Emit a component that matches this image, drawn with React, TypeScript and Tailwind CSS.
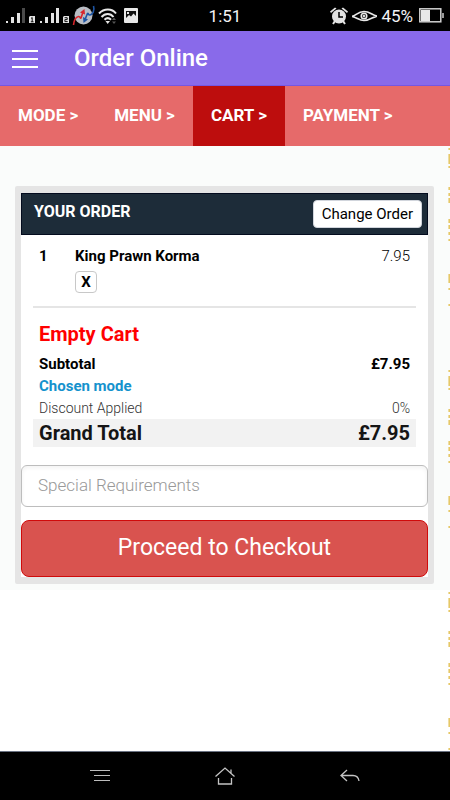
import type { ReactNode } from 'react';

const steps = [
  { label: 'MODE >', active: false },
  { label: 'MENU >', active: false },
  { label: 'CART >', active: true },
  { label: 'PAYMENT >', active: false },
];

const items = [{ qty: 1, name: 'King Prawn Korma', price: '7.95' }];

function Signal({ sim, weak }: { sim: string; weak?: boolean }) {
  return (
    <svg width="30" height="18" viewBox="0 0 30 18" fill="#e4e4e4">
      <rect x="0" y="14" width="2" height="2" />
      <rect x="5" y="10" width="3" height="6" />
      <rect x="11" y="6" width="3" height="10" />
      <rect x="16" y="1" width="3" height="15" fill={weak ? '#4a4a4a' : '#e4e4e4'} />
      <path d="M24 9h5v7h-6v-6z" />
      <path
        d={sim === '1' ? 'M25 11.5l1.2-1v4.5M24.8 14.8h2.8' : 'M24.6 10.7h2.6v1.9h-2.3v2h2.8'}
        fill="none"
        stroke="#111"
        strokeWidth="1"
      />
    </svg>
  );
}

function StatusBar() {
  return (
    <div className="flex h-[31px] items-center justify-between bg-black px-1.5 text-[17px] leading-5 text-gray-100">
      <div className="flex flex-1 items-center">
        <div className="flex gap-1">
          <Signal sim="1" weak />
          <Signal sim="2" />
        </div>
        <svg className="ml-0.5" width="24" height="22" viewBox="0 0 24 22" fill="none">
          <circle cx="11.500" cy="10.500" r="9" fill="#b9bdc4" />
          <path d="M1.500 20C2 15 4 12 6.500 11.500c2-.3 1.500 2.500 2.500 1.500L11 7" stroke="#d9252b" strokeWidth="1.600" />
          <path d="M8 7.500L12.500 4l.5 5.500z" fill="#d9252b" />
          <path d="M21.500 1c1.500 5-1 8.500-3.500 9-2 .3-1.500-2.500-2.500-1.500l-2.500 6" stroke="#1e56a5" strokeWidth="1.600" />
          <path d="M11 12l.5 6 4.500-3.500z" fill="#1e56a5" />
        </svg>
        <svg className="ml-0.5" width="20" height="18" viewBox="0 0 20 18" fill="none" stroke="#e8e8e8" strokeWidth="2">
          <path d="M1 6.500c5-5.300 13-5.300 17 0" />
          <path d="M3.500 10c3.500-4 9-4 12 0" />
          <path d="M6.500 12.700c2-2 4.500-2 6.500 0" />
          <path d="M7.500 14l2.200 3 2.300-3z" fill="#e8e8e8" stroke="none" />
          <path d="M14 13l2-2.500 2 2.500zM14 14.500h4l-2 2.500z" fill="#555" stroke="none" />
        </svg>
        <svg className="ml-1.5" width="14" height="15" viewBox="0 0 14 15">
          <rect width="14" height="15" rx="1" fill="#e8e8e8" />
          <path d="M2 3h10v5L9.500 5.500 7 8.500 5 7l-3 3z" fill="#111" />
          <rect x="3" y="4" width="2" height="2" fill="#e8e8e8" />
        </svg>
      </div>
      <span>1:51</span>
      <div className="flex flex-1 items-center justify-end">
        <svg width="18" height="18" viewBox="0 0 18 18">
          <path d="M1 6L0 4.500 5 .5l1.500 1zM17 6l1-1.500-5-4-1.500 1z" fill="#e4e4e4" />
          <circle cx="9" cy="9.500" r="7" fill="#e4e4e4" />
          <path d="M3 17l2-3M15 17l-2-3" stroke="#e4e4e4" strokeWidth="2" />
          <path d="M9 5v5h4" fill="none" stroke="#000" strokeWidth="1.500" />
        </svg>
        <svg className="ml-1" width="25" height="14" viewBox="0 0 25 14" fill="none" stroke="#e8e8e8">
          <path d="M0 7.500c4-1 6-5 12-5s8 4 13 4.500c-4 1-7 4.500-13 4.500C7 11.500 5 8.500 0 7.500z" strokeWidth="1.700" />
          <circle cx="12" cy="7" r="2.800" strokeWidth="1.500" />
          <circle cx="12" cy="7" r="1" fill="#e8e8e8" />
        </svg>
        <span className="ml-1">45%</span>
        <svg className="ml-1.5" width="25" height="15" viewBox="0 0 25 15">
          <rect x=".8" y=".8" width="21" height="13" fill="none" stroke="#d0d0d0" strokeWidth="1.500" />
          <rect x="2" y="2" width="9" height="11" fill="#e8e8e8" />
          <rect x="23" y="5" width="2" height="5" fill="#999" />
        </svg>
      </div>
    </div>
  );
}

// thin strip of the site's tiled background showing past the page edge
function EdgePattern() {
  return (
    <svg className="absolute top-0 right-0 h-full w-0.5" aria-hidden="true">
      <defs>
        <pattern id="edge" width="2" height="222" patternUnits="userSpaceOnUse">
          <path
            d="M1.200 2v2M1.200 8v10M1.200 20v2M1.200 41v3M1.200 47v3M1.200 52v5M1.200 73v4M1.200 79v4M1.200 86v3M1.200 93v2M1.200 128v9M1.200 142v2M1.200 158v2"
            stroke="#e6c868"
            strokeWidth="1.600"
          />
        </pattern>
      </defs>
      <rect width="2" height="100%" fill="url(#edge)" />
    </svg>
  );
}

function TotalRow({ className, label, value }: { className: string; label: string; value?: ReactNode }) {
  return (
    <div className={`flex justify-between px-1.5 ${className}`}>
      <dt>{label}</dt>
      <dd>{value}</dd>
    </div>
  );
}

export default function App() {
  return (
    <div className="flex min-h-screen flex-col bg-white font-['Roboto',sans-serif] text-black">
      <StatusBar />

      <header className="flex h-[55px] items-center border-b border-[#7656e3] bg-[#896aea] px-3 text-white">
        <button type="button" aria-label="Open menu" className="flex w-[26px] flex-col gap-[6px] pt-0.5">
          <span className="h-[2px] w-full bg-white" />
          <span className="h-[2px] w-full bg-white" />
          <span className="h-[2px] w-full bg-white" />
        </button>
        <h1 className="ml-9 text-2xl leading-7 font-medium">Order Online</h1>
      </header>

      <nav className="flex h-[60px] bg-[#e66a6a] text-[17px] font-bold text-white">
        {steps.map((step) => (
          <a
            key={step.label}
            href="#"
            aria-current={step.active ? 'step' : undefined}
            className={`flex items-center px-[18px] ${step.active ? 'bg-[#bd0d0d]' : ''}`}
          >
            {step.label}
          </a>
        ))}
      </nav>

      <div className="relative flex-1">
        <main className="bg-[#fafcfb] pt-10 pr-4 pb-1.5 pl-[15px]">
          <form className="rounded-xs border-[6px] border-t-[7px] border-b-[7px] border-[#e5e5e5] bg-white">
            <div className="flex h-[42px] items-center justify-between border border-[#030b1e] bg-[#1d2c39] pr-[5px] pl-3">
              <h2 className="pb-1 text-base font-bold text-white">YOUR ORDER</h2>
              <button type="button" className="h-[28px] rounded-sm border border-gray-300 bg-white px-2 text-[15px]">
                Change Order
              </button>
            </div>

            <div className="px-3 pt-2.5">
              <ul className="border-b-2 border-[#e5e5e5] pb-[13px]">
                {items.map((item) => (
                  <li key={item.name} className="flex px-1.5 text-[15px] leading-[22px]">
                    <span className="w-9 font-bold">{item.qty}</span>
                    <div className="flex-1">
                      <p className="font-bold">{item.name}</p>
                      <button
                        type="button"
                        aria-label="Remove item"
                        className="mt-1 flex h-[22px] w-[22px] items-center justify-center rounded-sm border border-[#c8c8c8] font-bold"
                      >
                        X
                      </button>
                    </div>
                    <span className="font-light">{item.price}</span>
                  </li>
                ))}
              </ul>

              <h3 className="mt-2.5 px-1.5 text-xl leading-8 font-bold text-[#ff0000]">Empty Cart</h3>
              <dl className="mt-[3px]">
                <TotalRow className="text-[15px] leading-[22px] font-bold" label="Subtotal" value="£7.95" />
                <TotalRow className="text-[15px] leading-[22px] font-bold text-[#1492cd]" label="Chosen mode" />
                <TotalRow className="text-sm leading-[22px] font-light text-[#333]" label="Discount Applied" value="0%" />
                <TotalRow className="bg-[#f2f2f2] text-xl leading-7 font-bold text-[#151515]" label="Grand Total" value="£7.95" />
              </dl>
            </div>

            <input
              type="text"
              aria-label="Special Requirements"
              placeholder="Special Requirements"
              className="mt-[18px] block h-[42px] w-full rounded-md border border-[#bdbdbd] px-4 pb-0.5 text-[17px] font-light shadow-inner placeholder:text-[#999]"
            />
            <button
              type="submit"
              className="mt-[13px] block h-[57px] w-full rounded-lg border border-[#d00b0b] bg-[#d9534f] text-[23px] text-white"
            >
              Proceed to Checkout
            </button>
          </form>
        </main>
        <EdgePattern />
      </div>

      <footer className="grid h-[49px] grid-cols-[200px_1fr_200px] items-center justify-items-center border-t border-gray-500 bg-black">
        <button type="button" aria-label="Recent apps">
          <svg width="20" height="14" viewBox="0 0 20 14" fill="none" stroke="#bdbdbd">
            <path d="M0 1.500h20M4 6.500h16M4 11.500h16" />
          </svg>
        </button>
        <button type="button" aria-label="Home">
          <svg width="20" height="18" viewBox="0 0 20 18" fill="none" stroke="#c4c4c4" strokeWidth="1.300">
            <path d="M.5 9.500L10 1l9.500 8.500M16 6V2.500M3.500 11v6h13v-6" />
          </svg>
        </button>
        <button type="button" aria-label="Back">
          <svg width="20" height="14" viewBox="0 0 20 14" fill="none" stroke="#c4c4c4" strokeWidth="1.300">
            <path d="M7 1L1 6.500 7 12M1 6.500h12c3.500 0 5.500 2 6 5.500" />
          </svg>
        </button>
      </footer>
    </div>
  );
}
